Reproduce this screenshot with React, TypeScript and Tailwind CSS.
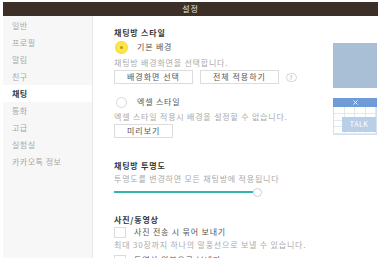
import { X } from "lucide-react";

const menuItems = ["일반", "프로필", "알림", "친구", "채팅", "통화", "고급", "실험실", "카카오톡 정보"];
const activeItem = "채팅";

function Radio({ checked }: { checked?: boolean }) {
  if (checked) {
    return (
      <span className="flex h-[11px] w-[11px] items-center justify-center rounded-full bg-[#fde64b] ring-1 ring-[#f3d63a]">
        <span className="h-[3px] w-[3px] rounded-full bg-[#b59a1a]" />
      </span>
    );
  }
  return <span className="h-[11px] w-[11px] rounded-full border border-[#d8d8d8] bg-white" />;
}

function Button({ label }: { label: string }) {
  return (
    <span className="flex h-[14px] items-center border border-[#dcdcdc] bg-white px-[12px] text-[8px] tracking-[1px] text-[#555]">
      {label}
    </span>
  );
}

function ExcelPreview() {
  return (
    <div className="relative h-[37px] w-[44px] bg-white">
      <div className="flex h-[9px] items-center justify-center bg-[#6f9bd6] text-white">
        <X size={7} strokeWidth={3} />
      </div>
      <div className="grid h-[28px] grid-cols-4 grid-rows-4 border-x border-b border-[#d3e0ef]">
        {Array.from({ length: 16 }).map((_, i) => (
          <span key={i} className="border-r border-b border-[#dfe8f3]" />
        ))}
      </div>
      <span className="absolute top-[19px] left-[9px] flex h-[15px] w-[34px] items-center justify-center bg-[#b9cfe8] text-[7px] tracking-[0.5px] text-white">
        TALK
      </span>
    </div>
  );
}

export default function App() {
  return (
    <div className="h-[258px] w-[381px] overflow-hidden bg-white px-[3px] pt-[2px] font-['Noto_Sans_CJK_KR',sans-serif]">
      {/* Title bar */}
      <div className="flex h-[14px] items-center justify-center bg-[#3c2f27] text-[8px] tracking-[1px] text-[#e9e3dd]">
        설정
      </div>

      <div className="flex h-[242px]">
        {/* Sidebar */}
        <aside className="w-[90px] border-r border-[#e8e8e8] bg-[#f7f7f7] pt-[1px]">
          {menuItems.map((m) => (
            <div
              key={m}
              className={`flex h-[17px] items-center px-[9px] text-[8px] tracking-[0.5px] ${
                m === activeItem ? "bg-white font-bold text-[#333]" : "text-[#a8a8a8]"
              }`}
            >
              {m}
            </div>
          ))}
        </aside>

        {/* Content */}
        <main className="flex-1 pr-[1px] pl-[21px] text-[8px] tracking-[0.8px]">
          {/* Chat room style */}
          <section className="mt-[11px] flex">
            <div className="flex-1">
              <h3 className="flex h-[12px] items-center font-bold text-[#333]">채팅방 스타일</h3>
              <div className="mt-[2px] flex h-[12px] items-center gap-[10px] pl-[2px] text-[#555]">
                <Radio checked />
                기본 배경
              </div>
              <p className="mt-[4px] flex h-[12px] items-center text-[#aaa]">채팅방 배경화면을 선택합니다.</p>
              <div className="mt-[1px] flex items-center gap-[7px]">
                <Button label="배경화면 선택" />
                <Button label="전체 적용하기" />
                <span className="flex h-[9px] w-[11px] items-center justify-center rounded-full border border-[#d5d5d5] text-[6px] text-[#999]">
                  ?
                </span>
              </div>
              <div className="mt-[12px] flex h-[12px] items-center gap-[10px] pl-[2px] text-[#555]">
                <Radio />
                엑셀 스타일
              </div>
              <p className="mt-[3px] flex h-[12px] items-center text-[#aaa]">엑셀 스타일 적용시 배경을 설정할 수 없습니다.</p>
              <div className="mt-[1px] flex">
                <Button label="미리보기" />
              </div>
            </div>
            <div className="w-[44px] pt-[16px]">
              <div className="h-[45px] w-[44px] bg-[#a9bfd6]" />
              <div className="mt-[10px]">
                <ExcelPreview />
              </div>
            </div>
          </section>

          {/* Transparency */}
          <section className="mt-[22px]">
            <h3 className="flex h-[12px] items-center font-bold text-[#333]">채팅방 투명도</h3>
            <p className="mt-[1px] flex h-[12px] items-center text-[#aaa]">투명도를 변경하면 모든 채팅방에 적용됩니다</p>
            <div className="mt-[2px] flex h-[10px] items-center">
              <span className="h-[2px] w-[139px] bg-[#34b3b1]" />
              <span className="h-[9px] w-[9px] rounded-full border border-[#d0d0d0] bg-white" />
            </div>
          </section>

          {/* Photos / videos */}
          <section className="mt-[17px]">
            <h3 className="flex h-[12px] items-center font-bold text-[#333]">사진/동영상</h3>
            <div className="flex h-[12px] items-center gap-[8px] text-[#555]">
              <span className="h-[11px] w-[12px] border border-[#dcdcdc] bg-white" />
              사진 전송 시 묶어 보내기
            </div>
            <p className="mt-[1px] flex h-[12px] items-center text-[#aaa]">최대 30장까지 하나의 말풍선으로 보낼 수 있습니다.</p>
            <div className="mt-[3px] flex h-[12px] items-center gap-[8px] text-[#555]">
              <span className="h-[11px] w-[12px] border border-[#dcdcdc] bg-white" />
              동영상 원본으로 보내기
            </div>
          </section>
        </main>
      </div>
    </div>
  );
}
